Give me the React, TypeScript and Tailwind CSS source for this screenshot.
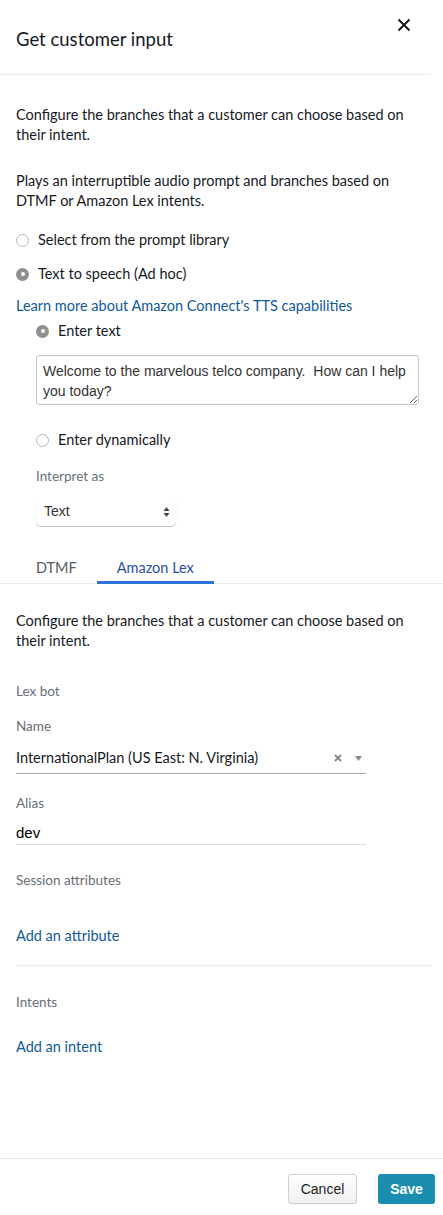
import React, { useState } from 'react';

const font = "font-['Lato','Liberation_Sans',sans-serif]";
const helv = "font-['Liberation_Sans',Arial,sans-serif]";

const Radio: React.FC<{ checked?: boolean; label: string; onClick?: () => void }> = ({ checked, label, onClick }) => (
  <button type="button" onClick={onClick} className="flex items-center gap-[9px] text-[14.5px] text-[#16191f] leading-5">
    {checked ? (
      <span className="w-[13px] h-[13px] rounded-full bg-[#8f8f8f] flex items-center justify-center">
        <span className="w-[4px] h-[4px] rounded-full bg-white" />
      </span>
    ) : (
      <span className="w-[13px] h-[13px] rounded-full border border-[#b8b8b8] bg-white" />
    )}
    <span>{label}</span>
  </button>
);

const Label: React.FC<{ children: React.ReactNode }> = ({ children }) => (
  <div className="text-[13.5px] text-[#687078] leading-5">{children}</div>
);

export default function App() {
  const [source, setSource] = useState<'library' | 'tts'>('tts');
  const [entry, setEntry] = useState<'text' | 'dynamic'>('text');
  const [tab, setTab] = useState<'dtmf' | 'lex'>('lex');
  const [text, setText] = useState('Welcome to the marvelous telco company.  How can I help you today?');

  return (
    <div className={`w-[443px] h-[1215px] bg-white flex flex-col ${font} text-[#16191f]`}>
      <header className="h-[75px] border-b border-[#eaeded] mr-[12px] flex items-start justify-between pl-4 pr-[20px]">
        <h1 className="text-[18.5px] leading-6 mt-[27px]">Get customer input</h1>
        <button type="button" aria-label="Close" className="mt-[18px]">
          <svg width="14" height="14" viewBox="0 0 14 14" fill="none" stroke="#16191f" strokeWidth="2">
            <path d="M1.5 1.5 L12.5 12.5 M12.5 1.5 L1.5 12.5" />
          </svg>
        </button>
      </header>

      <div className="flex-1 flex flex-col">
        <div className="px-4 pt-[30px]">
          <p className="text-[14.5px] leading-5 max-w-[395px]">Configure the branches that a customer can choose based on their intent.</p>
          <p className="text-[14.5px] leading-5 mt-[26px] max-w-[395px]">Plays an interruptible audio prompt and branches based on DTMF or Amazon Lex intents.</p>
          <div className="mt-[19px] flex flex-col gap-[14px]">
            <Radio label="Select from the prompt library" checked={source === 'library'} onClick={() => setSource('library')} />
            <Radio label="Text to speech (Ad hoc)" checked={source === 'tts'} onClick={() => setSource('tts')} />
          </div>
          <a href="#" className="block mt-[12px] text-[14.5px] leading-5 text-[#0f5a9b]">Learn more about Amazon Connect's TTS capabilities</a>
          <div className="pl-[20px] mt-[5px]">
            <Radio label="Enter text" checked={entry === 'text'} onClick={() => setEntry('text')} />
            <textarea
              value={text}
              onChange={(e) => setText(e.target.value)}
              rows={2}
              className={`${helv} block mt-[14px] w-[383px] h-[50px] border border-[#c6c6c6] rounded-[3px] px-[6px] py-[5px] text-[14px] leading-5 text-[#333] resize-y outline-none`}
            />
            <div className="mt-[25px]">
              <Radio label="Enter dynamically" checked={entry === 'dynamic'} onClick={() => setEntry('dynamic')} />
            </div>
            <div className="mt-[16px]">
              <Label>Interpret as</Label>
            </div>
            <div className="mt-[11px] w-[140px] h-[29px] rounded-[5px] bg-white shadow-[0_1px_1px_rgba(0,0,0,0.25)] flex items-center justify-between pl-[8px] pr-[6px]">
              <span className={`${helv} text-[14px] text-[#333]`}>Text</span>
              <svg width="7" height="12" viewBox="0 0 7 12" fill="#444">
                <path d="M3.5 1 L6.5 5 L0.5 5 Z M3.5 11 L6.5 7 L0.5 7 Z" />
              </svg>
            </div>
          </div>
        </div>

        <div className="mt-[25px] border-b border-[#eaeded] flex pl-4">
          <button type="button" onClick={() => setTab('dtmf')} className={`px-5 h-[33px] text-[14.5px] flex items-start pt-[6px] -mb-px border-b-[3px] ${tab === 'dtmf' ? 'border-[#2c72d8] text-[#2a4fa8]' : 'border-transparent text-[#545b64]'}`}>
            DTMF
          </button>
          <button type="button" onClick={() => setTab('lex')} className={`px-5 h-[33px] text-[14.5px] flex items-start pt-[6px] -mb-px border-b-[3px] ${tab === 'lex' ? 'border-[#2c72d8] text-[#2a4fa8]' : 'border-transparent text-[#545b64]'}`}>
            Amazon Lex
          </button>
        </div>

        <div className="px-4 pt-[27px]">
          <p className="text-[14.5px] leading-5 max-w-[395px]">Configure the branches that a customer can choose based on their intent.</p>
          <div className="mt-[30px]"><Label>Lex bot</Label></div>
          <div className="mt-[15px]"><Label>Name</Label></div>
          <div className="mt-[12px] w-[350px] h-[26px] border-b border-[#a8a8a8] flex items-start justify-between">
            <span className="text-[14.5px] leading-5">InternationalPlan (US East: N. Virginia)</span>
            <span className="flex items-center gap-[13px] pr-[4px] pt-[6px]">
              <svg width="8" height="8" viewBox="0 0 8 8" stroke="#8a8a8a" strokeWidth="2"><path d="M1 1 L7 7 M7 1 L1 7" /></svg>
              <svg width="7" height="5" viewBox="0 0 7 5" fill="#8a8a8a"><path d="M0 0 L7 0 L3.5 5 Z" /></svg>
            </span>
          </div>
          <div className="mt-[19px]"><Label>Alias</Label></div>
          <div className={`${helv} mt-[10px] w-[350px] h-[22px] border-b border-[#dcdcdc] text-[15px] leading-5 text-black`}>dev</div>
          <div className="mt-[25px]"><Label>Session attributes</Label></div>
          <a href="#" className="block mt-[36px] text-[14.5px] leading-5 text-[#0f5a9b]">Add an attribute</a>
          <div className="mt-[19px] border-t border-[#eaeded] mr-[-5px]" />
          <div className="mt-[26px]"><Label>Intents</Label></div>
          <a href="#" className="block mt-[25px] text-[14.5px] leading-5 text-[#0f5a9b]">Add an intent</a>
        </div>
      </div>

      <footer className="h-[57px] border-t border-[#e5e5e5] flex items-start justify-end gap-[21px] pr-[8px] pt-[15px]">
        <button type="button" className={`${helv} h-[30px] w-[69px] rounded-[3px] border border-[#cfcfcf] bg-gradient-to-b from-white to-[#f0f0f0] text-[14px] text-[#222]`}>
          Cancel
        </button>
        <button type="button" className={`${helv} h-[30px] w-[57px] rounded-[3px] bg-[#1b8eb0] text-[14px] font-bold text-white`}>
          Save
        </button>
      </footer>
    </div>
  );
}
